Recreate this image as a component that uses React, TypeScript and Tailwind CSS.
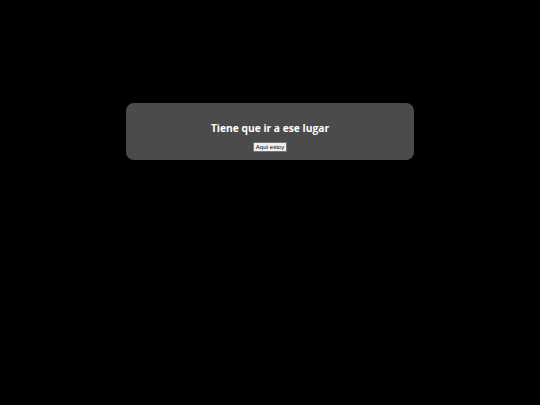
export default function App() {
  return (
    <div className="min-h-[405px] bg-black pt-[103px] flex justify-center">
      <div className="w-[288px] h-[57px] rounded-lg bg-[#4b4b4b] flex flex-col items-center pt-[17px]">
        <h1 className="text-white font-bold text-[10.25px] leading-[16px] font-['Open_Sans',sans-serif]">
          Tiene que ir a ese lugar
        </h1>
        <button className="mt-[6px] bg-[#efefef] text-black text-[6px] leading-[8px] px-[2px] border border-[#767676] rounded-[1px] font-['Liberation_Sans',sans-serif]">
          Aquí estoy
        </button>
      </div>
    </div>
  )
}
